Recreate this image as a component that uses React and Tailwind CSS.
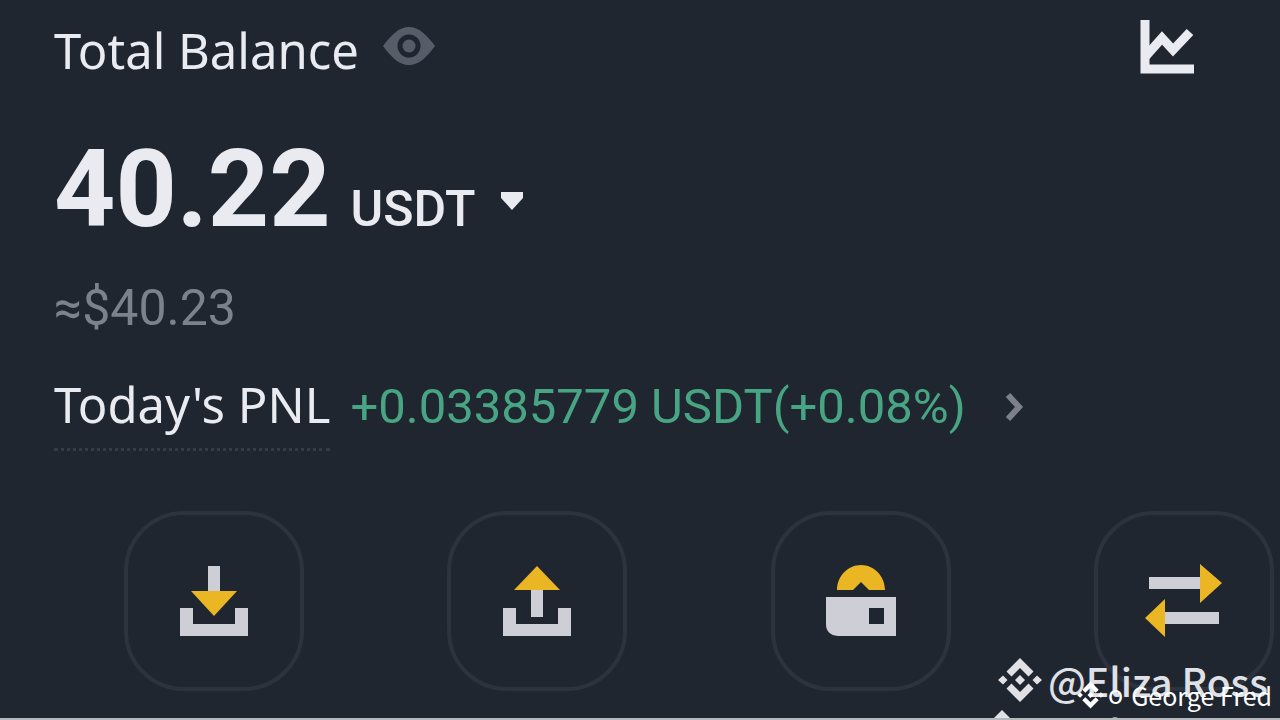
function BinanceMark({ className }) {
  return (
    <svg viewBox="0 0 44 46" className={className} fill="currentColor" aria-hidden="true">
      <path d="M22 1 35.500 14.500 30.500 19.500 22 11 13.500 19.500 8.500 14.500Z" />
      <path d="M22 45 35.500 31.500 30.500 26.500 22 35 13.500 26.500 8.500 31.500Z" />
      <path d="M22 18 27 23 22 28 17 23ZM5 18.500 9.500 23 5 27.500 0 23ZM39 18.500 44 23 39 27.500 34.500 23Z" />
    </svg>
  );
}

function DepositIcon() {
  return (
    <svg viewBox="0 0 70 72" className="h-18 w-[70px]" aria-hidden="true">
      <path fill="#cdced6" d="M29 1h12v28H29zM1 43h13v16h42V43h13v28H1z" />
      <path fill="#eab623" d="M12 26h46L35 51z" />
    </svg>
  );
}

function WithdrawIcon() {
  return (
    <svg viewBox="0 0 70 72" className="h-18 w-[70px]" aria-hidden="true">
      <path fill="#cdced6" d="M29 24h12v28H29zM1 43h13v16h42V43h13v28H1z" />
      <path fill="#eab623" d="M12 25h46L35 1z" />
    </svg>
  );
}

function WalletIcon() {
  return (
    <svg viewBox="0 0 70 72" className="h-18 w-[70px]" aria-hidden="true">
      <path fill="#eab623" d="M11 25C11 11 22 0 35 0s24 11 24 25H43l-8-8-8 8z" />
      <path fill="#cdced6" fillRule="evenodd" d="M0 32h70v39H12Q0 70 0 59zM43 43v16h15V43z" />
    </svg>
  );
}

function TransferIcon() {
  return (
    <svg viewBox="0 0 78 74" className="h-[74px] w-[78px]" aria-hidden="true">
      <path fill="#cdced6" d="M4 13h54v12H4zM20 48h54v12H20z" />
      <path fill="#eab623" d="M55 0 77 19 55 39zM20 35v38L0 54z" />
    </svg>
  );
}

const actions = [
  { label: "Deposit", Icon: DepositIcon },
  { label: "Withdraw", Icon: WithdrawIcon },
  { label: "Wallet", Icon: WalletIcon },
  { label: "Transfer", Icon: TransferIcon },
];

export default function App() {
  return (
    <main className="relative flex min-h-screen flex-col overflow-hidden border-b-2 border-[#b4b8bd] bg-[#202630] font-['Roboto',sans-serif] text-[#e9ebf1]">
      <header className="flex items-start justify-between pt-5 pr-[85px] pl-[54px]">
        <div className="flex items-center gap-6">
          <h1 className="font-['Noto_Sans',sans-serif] text-[49px] leading-[60px]">Total Balance</h1>
          <button aria-label="Hide balance" className="pb-2 text-[#565d68]">
            <svg viewBox="0 0 52 40" className="h-10 w-[52px]" aria-hidden="true">
              <path fill="currentColor" fillRule="evenodd" d="M0 20C8 9 16 1 26 1s18 8 26 19C44 31 36 39 26 39S8 31 0 20ZM26 8.500a11.500 11.500 0 1 0 0 23 11.500 11.500 0 0 0 0-23Z" />
              <circle cx="26" cy="20" r="6.500" fill="currentColor" />
            </svg>
          </button>
        </div>
        <button aria-label="Balance chart">
          <svg viewBox="0 0 55 55" className="size-[55px]" fill="none" stroke="currentColor" aria-hidden="true">
            <path strokeWidth="9" d="M5 0v49h49" />
            <path strokeWidth="9" d="M6 36 22 18l11 12L50 12" />
          </svg>
        </button>
      </header>

      <section className="flex flex-col pt-[50px] pl-[54px]">
        <div className="flex items-baseline gap-5">
          <p className="text-[107px] leading-[120px] font-bold">40.22</p>
          <button className="flex items-center gap-6 text-[50px] leading-[60px] font-medium">
            USDT
            <svg viewBox="0 0 24 18" className="mb-4 h-[18px] w-6" fill="currentColor" aria-hidden="true">
              <path d="M1 0h22v6L12 18 1 6z" />
            </svg>
          </button>
        </div>
        <p className="mt-7 text-[50px] leading-[60px] text-[#7d818c]">≈$40.23</p>
        <div className="mt-9 flex items-start gap-5">
          <span className="border-b-3 border-dotted border-[#343b46] pb-[14px] font-['Noto_Sans',sans-serif] text-[49px] leading-[60px]">
            Today's PNL
          </span>
          <a href="#pnl" className="flex items-center gap-10 pt-[3px] text-[49px] leading-[60px] text-[#48a583]">
            +0.03385779 USDT(+0.08%)
            <svg viewBox="0 0 18 30" className="h-[30px] w-[18px] text-[#7d7f8a]" fill="none" stroke="currentColor" strokeWidth="6" aria-hidden="true">
              <path d="M2 3 13 15 2 27" />
            </svg>
          </a>
        </div>
      </section>

      <nav className="mt-auto flex justify-between pr-[6px] pb-[27px] pl-[124px]">
        {actions.map(({ label, Icon }) => (
          <button
            key={label}
            aria-label={label}
            className="flex size-[180px] items-center justify-center rounded-[60px] border-4 border-[#2c333e]"
          >
            <Icon />
          </button>
        ))}
      </nav>

      <div className="absolute right-3 bottom-3 flex items-center gap-[6px] font-['Noto_Sans_CJK_SC',sans-serif] text-[39px] leading-[52px] font-medium text-[#dfe1e6]">
        <BinanceMark className="h-[46px] w-11" />
        @Eliza Ross
      </div>
      <div className="absolute right-2 bottom-[3px] flex items-center font-['Noto_Sans_CJK_SC',sans-serif] text-[25px] leading-[36px] text-white">
        <BinanceMark className="mr-1 h-7 w-[27px]" />
        <span className="mr-2 pb-1">o</span>
        <span>George Fred</span>
      </div>
      <div className="absolute right-3 -bottom-10 flex items-center gap-6 font-['Noto_Sans_CJK_SC',sans-serif] text-[39px] leading-[52px] font-medium text-[#dfe1e6]">
        <BinanceMark className="h-[46px] w-11" />
        @Eliza Ross
      </div>
    </main>
  );
}
